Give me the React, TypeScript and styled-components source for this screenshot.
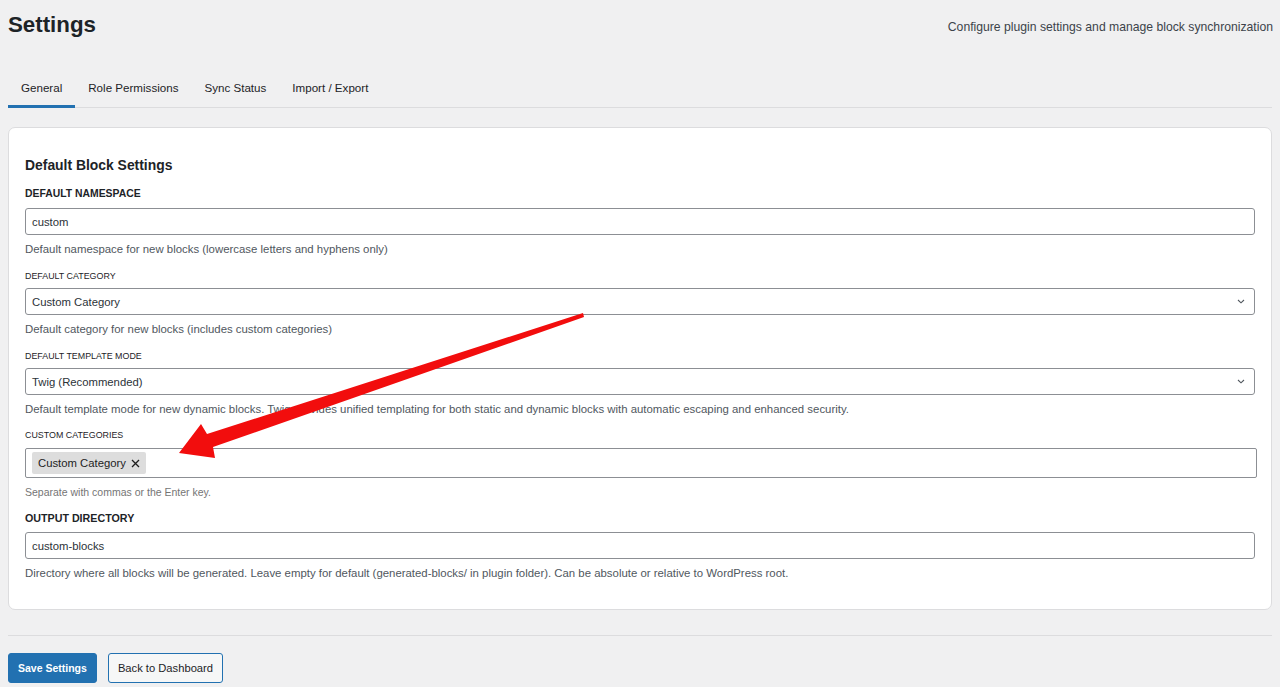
import React from "react";
import styled, { createGlobalStyle } from "styled-components";

const GlobalStyle = createGlobalStyle`
  html, body { margin: 0; padding: 0; background: #f0f0f1; }
  body { font-family: "Liberation Sans", Arial, sans-serif; color: #1d2327; }
  * { box-sizing: border-box; }
`;

const Page = styled.div`
  position: relative;
  width: 1280px;
  height: 687px;
  padding: 0 8px;
  overflow: hidden;
`;

const Header = styled.header`
  display: flex;
  align-items: center;
  justify-content: space-between;
  height: 50px;
`;

const Title = styled.h1`
  margin: 0;
  font-size: 22.3px;
  line-height: 28px;
  font-weight: 700;
  color: #1d2327;
`;

const Subtitle = styled.p`
  margin: 4px -1px 0 0;
  font-size: 12.2px;
  line-height: 16px;
  color: #3c434a;
`;

const TabBar = styled.nav`
  display: flex;
  margin-top: 20px;
  border-bottom: 1px solid #dcdcde;
`;

const Tab = styled.a<{ $active?: boolean }>`
  display: block;
  padding: 10px 13px 9px;
  font-size: 11.6px;
  line-height: 16px;
  color: #1d2327;
  font-weight: 400;
  text-decoration: none;
  border-bottom: 3px solid ${(p) => (p.$active ? "#2271b1" : "transparent")};
  margin-bottom: -1px;
`;

const Card = styled.section`
  margin-top: 19px;
  background: #fff;
  border: 1px solid #dcdcde;
  border-radius: 7px;
  padding: 27px 16px 27px;
  display: flex;
  flex-direction: column;
`;

const CardTitle = styled.h2`
  margin: 0 0 11px;
  font-size: 13.9px;
  line-height: 20px;
  font-weight: 700;
  color: #1d2327;
`;

const Field = styled.div<{ $gap?: number }>`
  display: flex;
  flex-direction: column;
  margin-bottom: ${(p) => p.$gap ?? 10}px;
  &:last-child { margin-bottom: 0; }
`;

const Label = styled.label<{ $strong?: boolean; $size?: number; $mb?: number }>`
  display: block;
  font-size: ${(p) => p.$size ?? 8.9}px;
  line-height: 16px;
  font-weight: ${(p) => (p.$strong ? 700 : 400)};
  text-transform: uppercase;
  color: #1d2327;
  margin-bottom: ${(p) => p.$mb ?? 4}px;
`;

const TextInput = styled.div`
  height: 27px;
  border: 1px solid #8c8f94;
  border-radius: 3px;
  padding: 0 6px;
  display: flex;
  align-items: center;
  font-size: 11.3px;
  color: #2c3338;
  background: #fff;
`;

const SelectBox = styled(TextInput)`
  justify-content: space-between;
  padding-right: 9px;
`;

const TokenField = styled.div`
  height: 30px;
  margin-right: -2px;
  border: 1px solid #8c8f94;
  border-radius: 2px;
  padding: 0 6px;
  display: flex;
  align-items: center;
  background: #fff;
`;

const Token = styled.span`
  display: inline-flex;
  align-items: center;
  gap: 5px;
  height: 22px;
  padding: 0 6px;
  background: #dddddd;
  border-radius: 2px;
  font-size: 11.3px;
  color: #1e1e1e;
`;

const Help = styled.p<{ $small?: boolean; $mt?: number }>`
  margin: ${(p) => p.$mt ?? 5}px 0 0;
  font-size: ${(p) => (p.$small ? 10.5 : 11.4)}px;
  line-height: ${(p) => (p.$small ? 16 : 18)}px;
  color: ${(p) => (p.$small ? "#757575" : "#50575e")};
`;

const Divider = styled.hr`
  margin: 25px 0 0;
  border: 0;
  border-top: 1px solid #dcdcde;
`;

const Actions = styled.div`
  display: flex;
  gap: 11px;
  margin-top: 17px;
`;

const Button = styled.button<{ $primary?: boolean }>`
  height: 30px;
  padding: 0 9px;
  border-radius: 3px;
  font-family: inherit;
  font-size: ${(p) => (p.$primary ? 10.5 : 11.2)}px;
  font-weight: ${(p) => (p.$primary ? 700 : 400)};
  border: 1px solid #2271b1;
  background: ${(p) => (p.$primary ? "#2271b1" : "#f6f7f7")};
  color: ${(p) => (p.$primary ? "#fff" : "#1d2327")};
  cursor: pointer;
`;

const Overlay = styled.svg`
  position: absolute;
  left: 0;
  top: 0;
  pointer-events: none;
`;

const Chevron = () => (
  <svg width="8" height="5" viewBox="0 0 8 5">
    <path d="M1 1l3 2.8L7 1" fill="none" stroke="#50575e" strokeWidth="1.1" />
  </svg>
);

const CloseX = () => (
  <svg width="9" height="9" viewBox="0 0 9 9">
    <path d="M1 1l7 7M8 1L1 8" stroke="#1e1e1e" strokeWidth="1.3" />
  </svg>
);

export default function App() {
  return (
    <Page>
      <GlobalStyle />
      <Header>
        <Title>Settings</Title>
        <Subtitle>Configure plugin settings and manage block synchronization</Subtitle>
      </Header>
      <TabBar>
        <Tab $active>General</Tab>
        <Tab>Role Permissions</Tab>
        <Tab>Sync Status</Tab>
        <Tab>Import / Export</Tab>
      </TabBar>
      <Card>
        <CardTitle>Default Block Settings</CardTitle>
        <Field>
          <Label $strong $size={10.4} $mb={6}>Default Namespace</Label>
          <TextInput>custom</TextInput>
          <Help>Default namespace for new blocks (lowercase letters and hyphens only)</Help>
        </Field>
        <Field>
          <Label>Default Category</Label>
          <SelectBox>
            <span>Custom Category</span>
            <Chevron />
          </SelectBox>
          <Help>Default category for new blocks (includes custom categories)</Help>
        </Field>
        <Field $gap={9}>
          <Label>Default Template Mode</Label>
          <SelectBox>
            <span>Twig (Recommended)</span>
            <Chevron />
          </SelectBox>
          <Help>
            Default template mode for new dynamic blocks. Twig provides unified templating for both static and dynamic
            blocks with automatic escaping and enhanced security.
          </Help>
        </Field>
        <Field>
          <Label $mb={5}>Custom Categories</Label>
          <TokenField>
            <Token>
              Custom Category
              <CloseX />
            </Token>
          </TokenField>
          <Help $small $mt={6}>Separate with commas or the Enter key.</Help>
        </Field>
        <Field>
          <Label $strong $size={10.7} $mb={6}>Output Directory</Label>
          <TextInput>custom-blocks</TextInput>
          <Help>
            Directory where all blocks will be generated. Leave empty for default (generated-blocks/ in plugin folder).
            Can be absolute or relative to WordPress root.
          </Help>
        </Field>
      </Card>
      <Divider />
      <Actions>
        <Button $primary>Save Settings</Button>
        <Button>Back to Dashboard</Button>
      </Actions>
      <Overlay width="1280" height="687" viewBox="0 0 1280 687">
        <polygon
          points="583,313 584,317 213,447 215,458 179,453 201,424 207,434"
          fill="#f20d0d"
        />
      </Overlay>
    </Page>
  );
}
